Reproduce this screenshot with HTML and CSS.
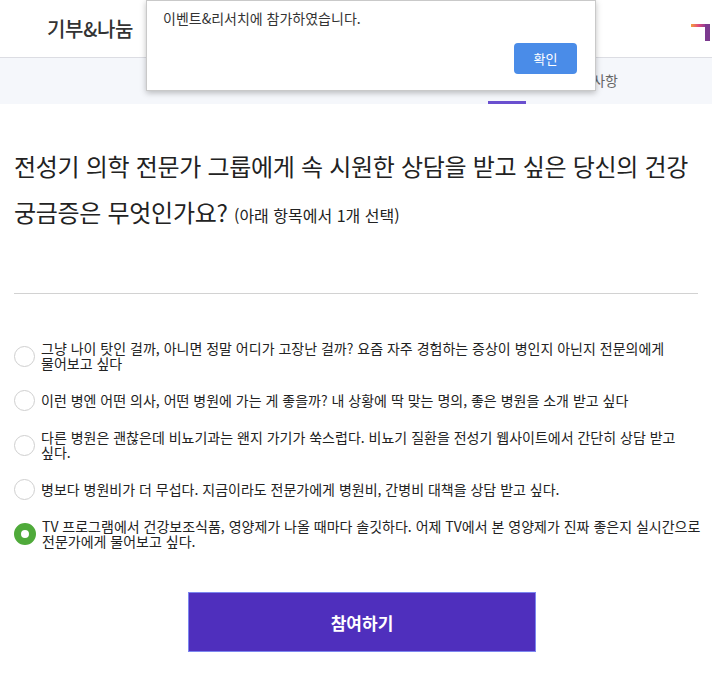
FILE: index.html
```html
<!DOCTYPE html>
<html lang="ko">
<head>
  <meta charset="UTF-8" />
  <title>이벤트&amp;리서치</title>
  <link rel="stylesheet" href="styles.css">
</head>
<body>
  <header class="top">
    <div class="brand">기부&amp;나눔</div>
    <svg class="logo" width="22" height="24" viewBox="0 0 22 24">
      <defs>
        <linearGradient id="lg" x1="0" x2="1" y1="0" y2="0">
          <stop offset="0" stop-color="#f5a03c" />
          <stop offset="0.5" stop-color="#e24a7c" />
          <stop offset="1" stop-color="#8b3b95" />
        </linearGradient>
      </defs>
      <rect x="3" y="7" width="15" height="3" fill="url(#lg)" />
      <rect x="17" y="7" width="5" height="18" fill="#7c3a8f" />
    </svg>
  </header>

  <nav class="tabs">
    <a class="tab">전성기 소개</a>
    <a class="tab active">이벤트</a>
    <a class="tab">공지사항</a>
  </nav>

  <div class="alert">
    <p class="alert-msg">이벤트&amp;리서치에 참가하였습니다.</p>
    <div class="alert-foot">
      <button class="alert-ok">확인</button>
    </div>
  </div>

  <main class="content">
    <h2 class="question">
      전성기 의학 전문가 그룹에게 속 시원한 상담을 받고 싶은 당신의 건강 궁금증은 무엇인가요?
      <span class="hint">(아래 항목에서 1개 선택)</span>
    </h2>

    <hr class="divider">

    <ul class="options">
      <li class="option">
        <span class="radio"></span>
        <span class="label">그냥 나이 탓인 걸까, 아니면 정말 어디가 고장난 걸까? 요즘 자주 경험하는 증상이 병인지 아닌지 전문의에게 물어보고 싶다</span>
      </li>
      <li class="option">
        <span class="radio"></span>
        <span class="label">이런 병엔 어떤 의사, 어떤 병원에 가는 게 좋을까? 내 상황에 딱 맞는 명의, 좋은 병원을 소개 받고 싶다</span>
      </li>
      <li class="option">
        <span class="radio"></span>
        <span class="label">다른 병원은 괜찮은데 비뇨기과는 왠지 가기가 쑥스럽다. 비뇨기 질환을 전성기 웹사이트에서 간단히 상담 받고 싶다.</span>
      </li>
      <li class="option">
        <span class="radio"></span>
        <span class="label">병보다 병원비가 더 무섭다. 지금이라도 전문가에게 병원비, 간병비 대책을 상담 받고 싶다.</span>
      </li>
      <li class="option">
        <span class="radio checked"></span>
        <span class="label">TV 프로그램에서 건강보조식품, 영양제가 나올 때마다 솔깃하다. 어제 TV에서 본 영양제가 진짜 좋은지 실시간으로 전문가에게 물어보고 싶다.</span>
      </li>
    </ul>

    <button class="submit">참여하기</button>
  </main>
</body>
</html>
```

FILE: styles.css
```css
html, body {
  margin: 0;
  background: #fff;
  color: #222;
  font-family: "Noto Sans CJK KR", "Noto Sans", sans-serif;
  word-break: keep-all;
}

.top {
  height: 57px;
  display: flex;
  align-items: center;
  justify-content: space-between;
  padding: 0 2px 0 47px;
  border-bottom: 1px solid #dcdde3;
}

.brand {
  font-size: 20px;
  font-weight: 500;
  color: #333;
  letter-spacing: -0.3px;
}

.logo {
  display: block;
}

.tabs {
  height: 46px;
  background: #f5f7fb;
  display: flex;
  justify-content: flex-end;
  gap: 40px;
  padding-right: 94px;
}

.tab {
  font-size: 14px;
  color: #666;
  line-height: 44px;
  border-bottom: 3px solid transparent;
}

.tab.active {
  color: #5a3fc8;
  border-bottom-color: #6a4fcf;
}

.alert {
  position: absolute;
  top: 0;
  left: 146px;
  width: 450px;
  height: 91px;
  background: #fff;
  border: 1px solid #c9c9c9;
  box-shadow: 0 2px 6px rgba(0, 0, 0, 0.25);
  padding: 0 18px 0 16px;
  box-sizing: border-box;
}

.alert-msg {
  margin: 8px 0 0;
  font-size: 14px;
  line-height: 18px;
  color: #333;
}

.alert-foot {
  display: flex;
  justify-content: flex-end;
  margin-top: 16px;
}

.alert-ok {
  width: 63px;
  height: 31px;
  border: none;
  border-radius: 4px;
  background: #4a8ce8;
  color: #fff;
  font-family: inherit;
  font-size: 13px;
}

.content {
  padding: 0 14px;
}

.question {
  margin: 39px 0 0;
  font-size: 24px;
  font-weight: 400;
  line-height: 46px;
  letter-spacing: -0.3px;
  color: #222;
}

.hint {
  font-size: 16px;
  letter-spacing: 0;
}

.divider {
  margin: 55px 0 0;
  border: none;
  border-top: 1px solid #d2d2d2;
}

.options {
  list-style: none;
  margin: 47px -8px 0 0;
  padding: 0;
  display: flex;
  flex-direction: column;
  gap: 19px;
}

.option {
  display: flex;
  align-items: center;
  gap: 6px;
}

.radio {
  flex: none;
  width: 21px;
  height: 21px;
  border: 1px solid #cfcfcf;
  border-radius: 50%;
  box-sizing: border-box;
  background: #fff;
}

.radio.checked {
  width: 22px;
  height: 22px;
  border: 7px solid #4faa3a;
}

.label {
  font-size: 14px;
  line-height: 15px;
  color: #222;
}

.submit {
  display: block;
  width: 348px;
  height: 60px;
  margin: 43px 0 0 174px;
  background: #4f2fbd;
  border: 1px solid #7c86f0;
  color: #fff;
  font-family: inherit;
  font-size: 17px;
  font-weight: 700;
}
```
